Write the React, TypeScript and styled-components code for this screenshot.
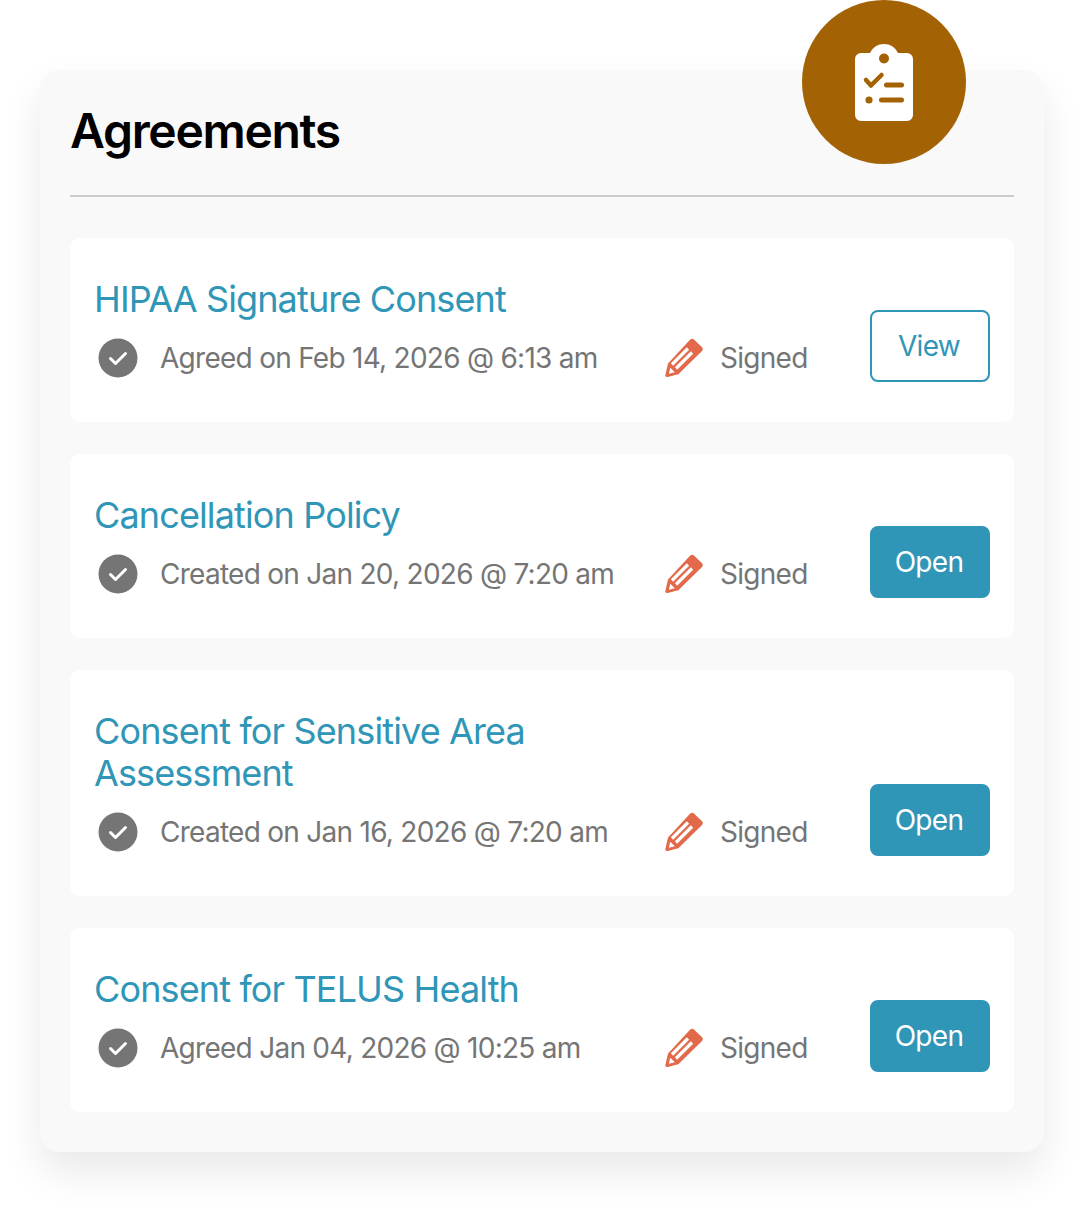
import React from "react";
import styled, { createGlobalStyle } from "styled-components";

const Global = createGlobalStyle`
  html, body { margin: 0; padding: 0; background: #fff; }
  body { font-family: Inter, "Liberation Sans", sans-serif; }
`;

const Page = styled.div`
  position: relative;
  width: 1084px;
  height: 1212px;
  box-sizing: border-box;
  padding: 70px 40px 0;
  overflow: hidden;
`;

const Panel = styled.section`
  background: #f9f9f9;
  border-radius: 20px;
  padding: 30px 30px 40px;
  box-shadow: 0 20px 40px rgba(0, 0, 0, 0.09);
`;

const Heading = styled.h1`
  margin: 0;
  font-size: 48px;
  line-height: 62px;
  font-weight: 600;
  letter-spacing: -0.027em;
  color: #000;
  padding-bottom: 33px;
  border-bottom: 2px solid #cccccc;
`;

const List = styled.div`
  display: flex;
  flex-direction: column;
  gap: 32px;
  margin-top: 41px;
`;

const Card = styled.article`
  display: flex;
  align-items: flex-end;
  justify-content: space-between;
  background: #fff;
  border-radius: 10px;
  padding: 40px 24px;
`;

const Body = styled.div`
  display: flex;
  flex-direction: column;
  gap: 14px;
`;

const Title = styled.h2`
  margin: 0;
  width: 480px;
  font-size: 36px;
  line-height: 42px;
  font-weight: 400;
  letter-spacing: -0.024em;
  color: #2f96b7;
`;

const Meta = styled.div`
  display: flex;
  align-items: center;
  height: 48px;
`;

const DateCell = styled.div`
  display: flex;
  align-items: center;
  width: 570px;
  gap: 22px;
  padding-left: 4px;
  box-sizing: border-box;
`;

const StatusCell = styled.div`
  display: flex;
  align-items: center;
  gap: 16px;
`;

const Label = styled.span`
  font-size: 28px;
  line-height: 34px;
  letter-spacing: -0.026em;
  color: #757575;
  white-space: nowrap;
`;

const ActionButton = styled.button<{ $outline?: boolean }>`
  width: 120px;
  height: 72px;
  box-sizing: border-box;
  border-radius: 8px;
  border: 2px solid #2f96b7;
  background: ${(p) => (p.$outline ? "#fff" : "#2f96b7")};
  color: ${(p) => (p.$outline ? "#2f96b7" : "#fff")};
  font-family: inherit;
  font-size: 28px;
  letter-spacing: -0.024em;
  padding: 0 2px 0 0;
`;

const Badge = styled.div`
  position: absolute;
  left: 802px;
  top: 0;
  width: 164px;
  height: 164px;
  border-radius: 50%;
  background: #a36305;
  display: flex;
  align-items: center;
  justify-content: center;
`;

const CheckIcon = () => (
  <svg width="40" height="40" viewBox="0 0 40 40" aria-hidden="true">
    <circle cx="20" cy="20" r="19.5" fill="#757575" />
    <path d="M12.5 20.5 L17.5 25.5 L27.500 15.500" fill="none" stroke="#fff" strokeWidth="3" strokeLinecap="round" strokeLinejoin="round" />
  </svg>
);

const PencilIcon = () => (
  <svg width="40" height="40" viewBox="0 0 40 40" aria-hidden="true">
    <path
      fill="#e2694a"
      d="M26 1.700 a3 3 0 0 1 4.200 0 l7.600 7.300 a3 3 0 0 1 0 4.200 L14.300 36.200 L3.600 38.900 a1.800 1.800 0 0 1 -2.200 -2.200 L4 25.500 Z"
    />
    <path d="M24 10.500 L8 26.500 M28 14.500 L12 30.500" fill="none" stroke="#fff" strokeWidth="3.200" />
    <path fill="#fff" d="M6.300 29.800 L10.800 34.300 L4.800 35.800 Z" />
  </svg>
);

const ClipboardIcon = () => (
  <svg width="58" height="77" viewBox="0 0 58 77" aria-hidden="true">
    <path
      fill="#fff"
      d="M15 9 C18 3 23 0 29 0 C35 0 40 3 43 9 L52 9 A6 6 0 0 1 58 15 L58 71 A6 6 0 0 1 52 77 L6 77 A6 6 0 0 1 0 71 L0 15 A6 6 0 0 1 6 9 Z"
    />
    <circle cx="29" cy="14.500" r="5" fill="#a36305" />
    <path d="M11 36 L16 41.500 L26.500 31" fill="none" stroke="#a36305" strokeWidth="4.500" strokeLinecap="round" strokeLinejoin="round" />
    <path d="M31.500 41 H46.500 M26.500 56 H46.500" fill="none" stroke="#a36305" strokeWidth="5" strokeLinecap="round" />
    <circle cx="14" cy="56" r="3.600" fill="#a36305" />
  </svg>
);

const rows = [
  { title: "HIPAA Signature Consent", date: "Agreed on Feb 14, 2026 @ 6:13 am", action: "View" },
  { title: "Cancellation Policy", date: "Created on Jan 20, 2026 @ 7:20 am", action: "Open" },
  { title: "Consent for Sensitive Area Assessment", date: "Created on Jan 16, 2026 @ 7:20 am", action: "Open" },
  { title: "Consent for TELUS Health", date: "Agreed Jan 04, 2026 @ 10:25 am", action: "Open" },
];

export default function App() {
  return (
    <Page>
      <Global />
      <Panel>
        <Heading>Agreements</Heading>
        <List>
          {rows.map((r) => (
            <Card key={r.title}>
              <Body>
                <Title>{r.title}</Title>
                <Meta>
                  <DateCell>
                    <CheckIcon />
                    <Label>{r.date}</Label>
                  </DateCell>
                  <StatusCell>
                    <PencilIcon />
                    <Label>Signed</Label>
                  </StatusCell>
                </Meta>
              </Body>
              <ActionButton $outline={r.action === "View"}>{r.action}</ActionButton>
            </Card>
          ))}
        </List>
      </Panel>
      <Badge>
        <ClipboardIcon />
      </Badge>
    </Page>
  );
}
